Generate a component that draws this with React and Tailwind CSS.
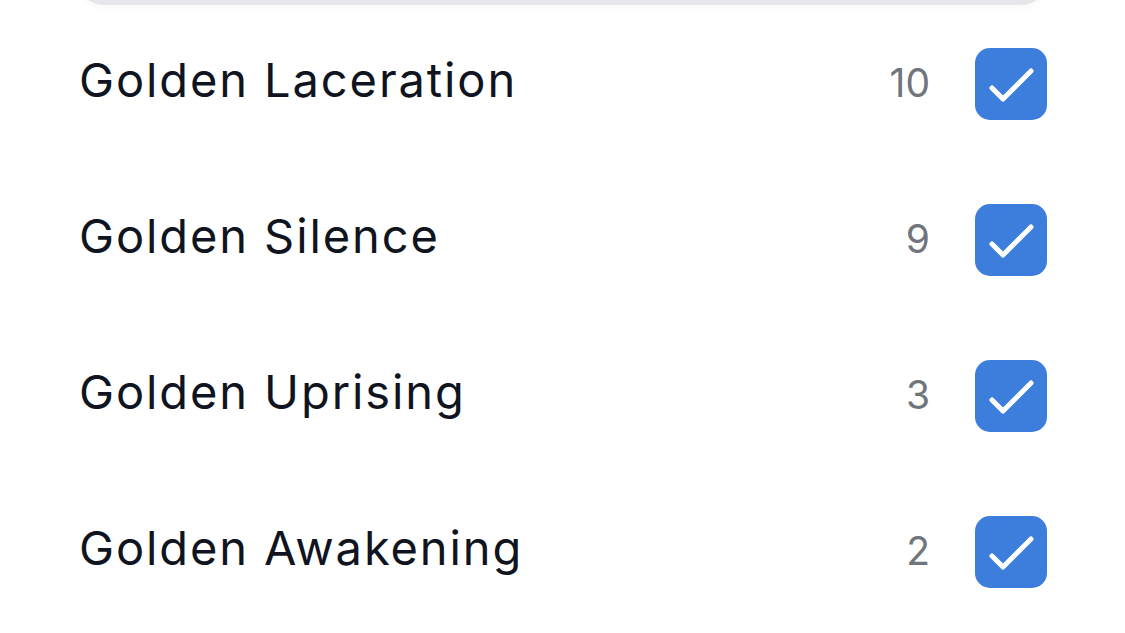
import React, { useState } from "react";

const collections = [
	{ id: "laceration", name: "Golden Laceration", count: 10 },
	{ id: "silence", name: "Golden Silence", count: 9 },
	{ id: "uprising", name: "Golden Uprising", count: 3 },
	{ id: "awakening", name: "Golden Awakening", count: 2 },
];

const CheckBox = ({ checked, onToggle }) => {
	return (
		<button
			type="button"
			onClick={onToggle}
			className={`flex items-center justify-center w-[72px] h-[72px] rounded-[15px] shrink-0 ${
				checked ? "bg-[#3d7ddc]" : "bg-white border-4 border-gray-300"
			}`}
		>
			{checked && (
				<svg width="72" height="72" viewBox="0 0 72 72" fill="none">
					<path
						d="M17 40 L28 51 L56 23"
						stroke="#ffffff"
						strokeWidth="5"
						strokeLinecap="round"
						strokeLinejoin="round"
					/>
				</svg>
			)}
		</button>
	);
};

const App = () => {
	const [selected, setSelected] = useState(collections.map((c) => c.id));

	const toggle = (id) => {
		setSelected((prev) =>
			prev.includes(id) ? prev.filter((x) => x !== id) : [...prev, id]
		);
	};

	return (
		<div
			className="w-[1125px] h-[633px] bg-white overflow-hidden"
			style={{ fontFamily: "Inter, 'Noto Sans', sans-serif" }}
		>
			{/* search field, scrolled mostly out of view */}
			<div className="px-[75px]">
				<div className="h-[60px] -mt-[55px] rounded-full bg-[#e5e6e9] shadow-[0_3px_6px_rgba(0,0,0,0.03)]" />
			</div>

			{/* collection filter list */}
			<div className="pl-[79px] pr-[78px] pt-px">
				{collections.map((c) => (
					<div key={c.id} className="flex items-center h-[156px]">
						<span className="flex-1 text-[47px] leading-none text-[#0f1420] tracking-[1.9px] -mt-[9px]">
							{c.name}
						</span>
						<span className="text-[39px] leading-none text-[#70757c] mr-[45px] -mt-[3px]">
							{c.count}
						</span>
						<CheckBox
							checked={selected.includes(c.id)}
							onToggle={() => toggle(c.id)}
						/>
					</div>
				))}
			</div>
		</div>
	);
};

export default App;
